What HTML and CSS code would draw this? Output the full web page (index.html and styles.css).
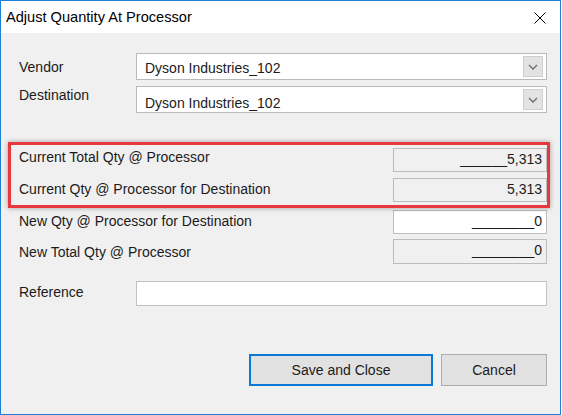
FILE: index.html
```html
<!DOCTYPE html>
<html>
<head>
<meta charset="utf-8">
<title>Adjust Quantity At Processor</title>
<link rel="stylesheet" href="styles.css">
</head>
<body>
<div class="window">
  <div class="titlebar">
    <span class="title">Adjust Quantity At Processor</span>
    <span class="close">
      <svg width="12" height="12" viewBox="0 0 12 12"><path d="M0.5 0.5 L11.5 11.5 M11.5 0.5 L0.5 11.5" stroke="#000" stroke-width="1" fill="none"/></svg>
    </span>
  </div>
  <div class="client">
    <div class="row row-vendor">
      <span class="label label-mid">Vendor</span>
      <div class="combo">
        <span class="combo-text">Dyson Industries_102</span>
        <span class="drop"><svg width="10" height="6" viewBox="0 0 10 6"><path d="M1 1 L5 5 L9 1" stroke="#6d6d6d" stroke-width="1.3" fill="none"/></svg></span>
      </div>
    </div>
    <div class="row row-dest">
      <span class="label label-top">Destination</span>
      <div class="combo">
        <span class="combo-text combo-text-low">Dyson Industries_102</span>
        <span class="drop"><svg width="10" height="6" viewBox="0 0 10 6"><path d="M1 1 L5 5 L9 1" stroke="#6d6d6d" stroke-width="1.3" fill="none"/></svg></span>
      </div>
    </div>

    <div class="qty qty-1">
      <span class="qlabel">Current Total Qty @ Processor</span>
      <div class="field readonly">______5,313</div>
    </div>
    <div class="qty qty-2">
      <span class="qlabel">Current Qty @ Processor for Destination</span>
      <div class="field readonly">5,313</div>
    </div>
    <div class="qty qty-3">
      <span class="qlabel">New Qty @ Processor for Destination</span>
      <div class="field">________0</div>
    </div>
    <div class="qty qty-4">
      <span class="qlabel">New Total Qty @ Processor</span>
      <div class="field readonly">________0</div>
    </div>

    <div class="row row-ref">
      <span class="label label-ref">Reference</span>
      <div class="textbox"></div>
    </div>

    <div class="buttons">
      <button class="btn btn-default">Save and Close</button>
      <button class="btn btn-cancel">Cancel</button>
    </div>
  </div>
  <div class="highlight"></div>
</div>
</body>
</html>
```

FILE: styles.css
```css
html, body {
  margin: 0;
  padding: 0;
  background: #ffffff;
}

body {
  font-family: "Liberation Sans", Arial, sans-serif;
  font-size: 14px;
  line-height: 16px;
  color: #1b1b1b;
}

.window {
  position: relative;
  width: 559px;
  height: 413px;
  border: 1px solid #1c80d6;
  background: #f0f0f0;
  display: flex;
  flex-direction: column;
}

.titlebar {
  height: 32px;
  background: #ffffff;
  display: flex;
  align-items: center;
  justify-content: space-between;
  padding: 0 14px 0 5px;
}

.title {
  font-size: 14.6px;
  line-height: 17px;
  color: #000;
  margin-top: 0;
}

.close {
  display: flex;
  width: 12px;
  height: 12px;
  margin-top: 1px;
}

.client {
  flex: 1;
  padding: 20px 13px 0 18px;
  display: flex;
  flex-direction: column;
}

.row {
  display: flex;
}

.label {
  width: 117px;
  flex: none;
}

.label-mid { padding-top: 6px; }
.label-top { padding-top: 1px; }
.label-ref { padding-top: 3px; }

.row-vendor { height: 27px; }
.row-dest { height: 27px; margin-top: 6px; }

.combo {
  flex: 1;
  box-sizing: border-box;
  height: 27px;
  background: #ffffff;
  border: 1px solid #b9b9b9;
  display: flex;
  align-items: flex-start;
  justify-content: space-between;
  padding: 2px 3px 0 8px;
}

.combo-text {
  padding-top: 4px;
  color: #1b1b1b;
}

.combo-text-low { padding-top: 6px; }

.drop {
  width: 20px;
  height: 21px;
  box-sizing: border-box;
  background: #e3e3e3;
  border: 1px solid #cfcfcf;
  display: flex;
  align-items: center;
  justify-content: center;
}

.qty {
  display: flex;
  justify-content: space-between;
  align-items: flex-start;
  height: 24px;
}

.qty-1 { margin-top: 35px; }
.qty-2 { margin-top: 6px; }
.qty-3 { margin-top: 8px; }
.qty-4 { margin-top: 5px; height: 25px; }

.qlabel { padding-top: 1px; }
.qty-2 .qlabel { padding-top: 3px; }
.qty-3 .qlabel { padding-top: 3px; }
.qty-4 .qlabel { padding-top: 5px; }

.field {
  width: 154px;
  box-sizing: border-box;
  height: 100%;
  border: 1px solid #bdbdbd;
  background: #ffffff;
  text-align: right;
  padding: 2px 4px 0 0;
  color: #1b1b1b;
}

.field.readonly {
  background: #f0f0f0;
}

.row-ref {
  margin-top: 17px;
  height: 25px;
}

.textbox {
  flex: 1;
  box-sizing: border-box;
  height: 25px;
  background: #ffffff;
  border: 1px solid #c2c2c2;
}

.buttons {
  margin-top: 48px;
  display: flex;
  justify-content: flex-end;
  gap: 8px;
}

.btn {
  font-family: "Liberation Sans", Arial, sans-serif;
  font-size: 14px;
  line-height: 16px;
  color: #1b1b1b;
  height: 32px;
  background: #e1e1e1;
  box-sizing: border-box;
  padding: 0;
  margin: 0;
}

.btn-default {
  width: 184px;
  border: 2px solid #0a78d6;
}

.btn-cancel {
  width: 106px;
  border: 1px solid #adadad;
}

.highlight {
  position: absolute;
  left: 7px;
  top: 141px;
  width: 536px;
  height: 60px;
  border: 3px solid #e8373e;
  box-shadow: 0 0 5px rgba(0, 0, 0, 0.35);
  pointer-events: none;
}
```
